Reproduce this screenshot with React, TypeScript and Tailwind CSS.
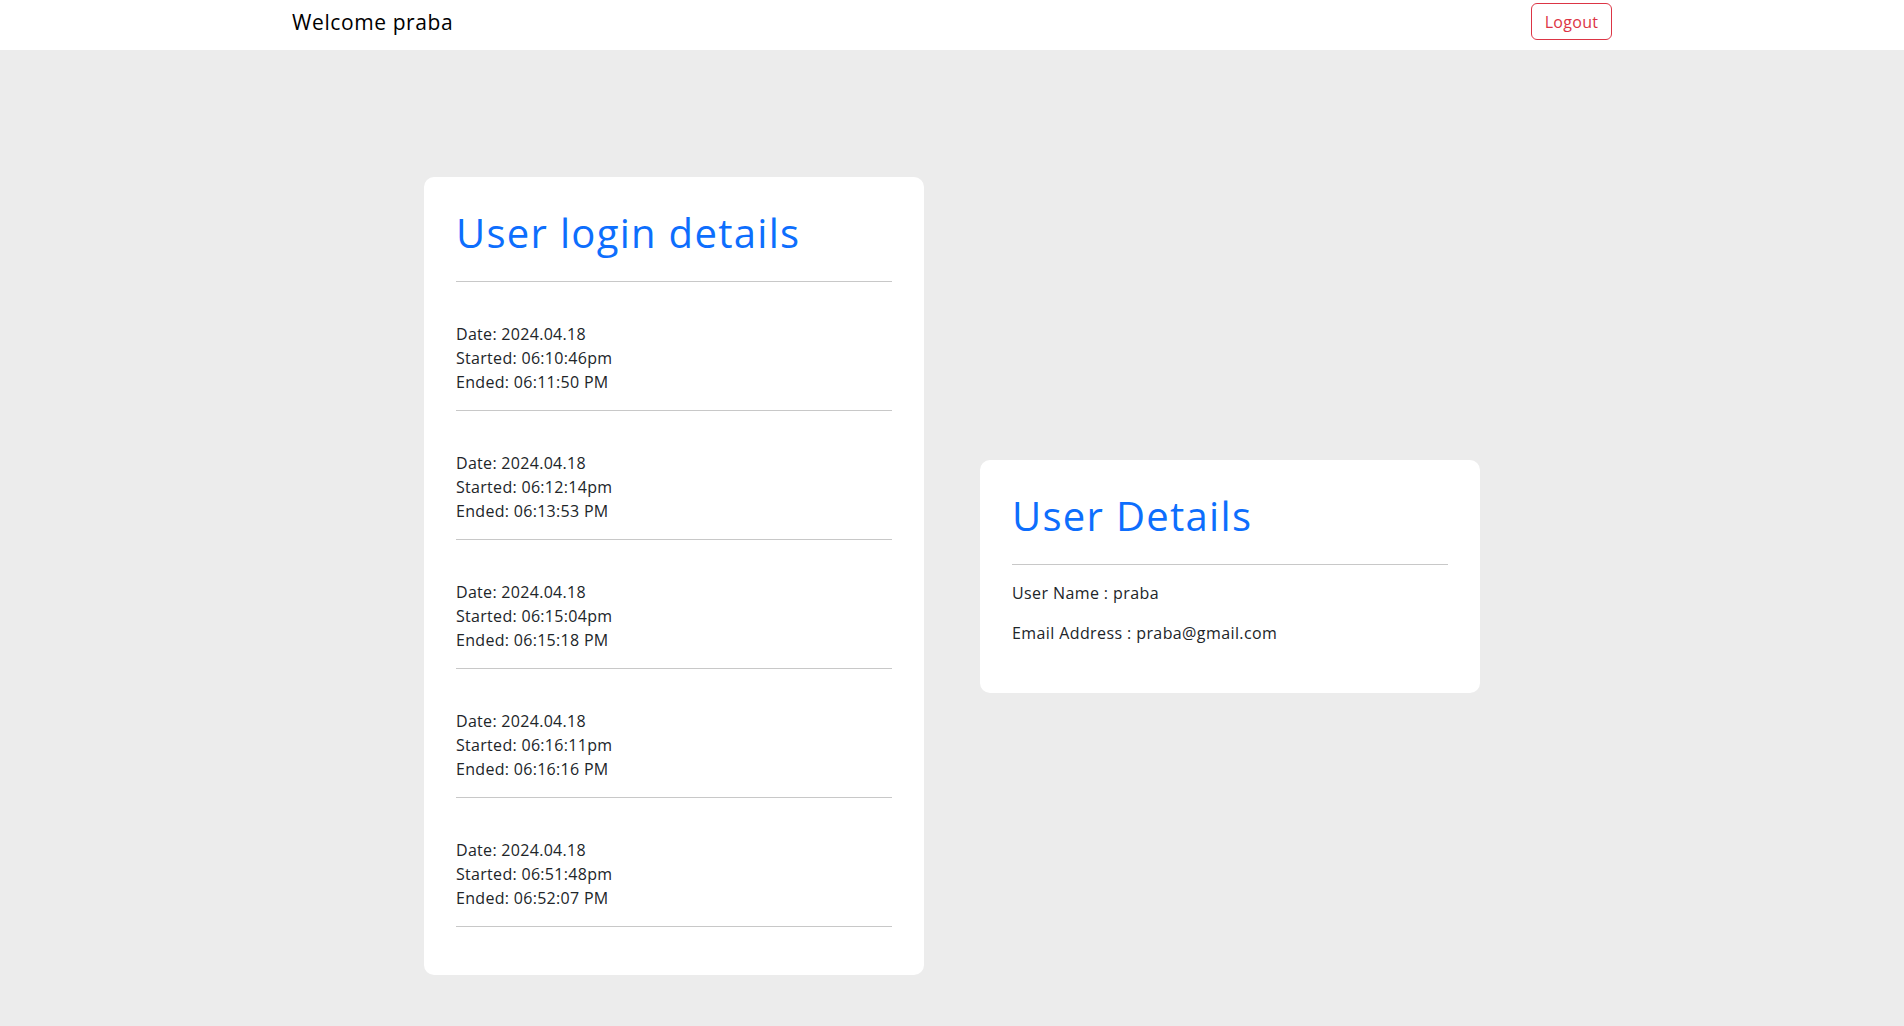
import React from "react";

const sessions = [
  { date: "2024.04.18", started: "06:10:46pm", ended: "06:11:50 PM" },
  { date: "2024.04.18", started: "06:12:14pm", ended: "06:13:53 PM" },
  { date: "2024.04.18", started: "06:15:04pm", ended: "06:15:18 PM" },
  { date: "2024.04.18", started: "06:16:11pm", ended: "06:16:16 PM" },
  { date: "2024.04.18", started: "06:51:48pm", ended: "06:52:07 PM" },
];

const font = { fontFamily: '"Open Sans", "Liberation Sans", sans-serif' };

export default function App() {
  return (
    <div className="min-h-[1026px] bg-[#ececec] text-[#212529]" style={font}>
      <nav className="h-[50px] bg-white">
        <div className="mx-auto flex h-full w-[1320px] items-start justify-between">
          <span className="mt-[7px] text-[21px] leading-[30px] tracking-[0.6px] text-black">Welcome praba</span>
          <button className="mt-[3px] flex h-[37px] w-[81px] items-center justify-center rounded-[6px] border border-[#dc3545] text-[16px] tracking-[0.3px] text-[#dc3545]">
            Logout
          </button>
        </div>
      </nav>
      <main className="flex items-center justify-center gap-[56px] pt-[127px] pb-[51px]">
        <div className="w-[500px] rounded-[10px] bg-white p-[32px]">
          <h1 className="pb-[8px] text-[40px] font-medium leading-[48px] tracking-[1.3px] text-[#0d6efd]">
            User login details
          </h1>
          <hr className="my-[16px] border-t border-[#c8c8c8]" />
          {sessions.map((s, i) => (
            <div key={i}>
              <div className="h-[24px]" />
              <div className="text-[16px] leading-[24px] tracking-[0.3px]">
                <div>Date: {s.date}</div>
                <div>Started: {s.started}</div>
                <div>Ended: {s.ended}</div>
              </div>
              <hr className="my-[16px] border-t border-[#c8c8c8]" />
            </div>
          ))}
        </div>
        <div className="w-[500px] rounded-[10px] bg-white p-[32px]">
          <h1 className="pb-[8px] text-[40px] font-medium leading-[48px] tracking-[1.3px] text-[#0d6efd]">
            User Details
          </h1>
          <hr className="my-[16px] border-t border-[#c8c8c8]" />
          <p className="mb-[16px] text-[16px] leading-[24px] tracking-[0.4px]">User Name : praba</p>
          <p className="mb-[16px] text-[16px] leading-[24px] tracking-[0.4px]">Email Address : praba@gmail.com</p>
        </div>
      </main>
    </div>
  );
}
